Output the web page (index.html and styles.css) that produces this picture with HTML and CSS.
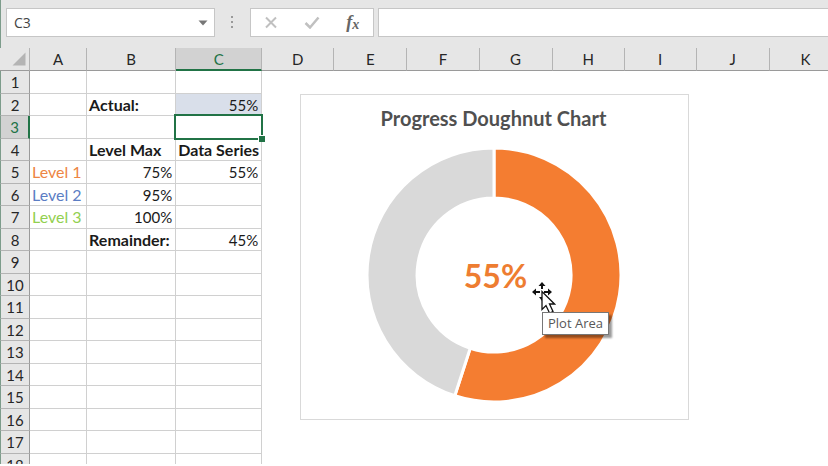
FILE: index.html
```html
<!DOCTYPE html>
<html lang="en">
<head>
    <meta charset="utf-8">
    <title>Progress Doughnut Chart</title>
    <link rel="stylesheet" href="styles.css">
</head>
<body>
    <header class="formula-bar">
        <div class="name-box">
            <input type="text" class="name-input" aria-label="Name box" value="C3">
            <button type="button" class="name-toggle" aria-label="Open name list">
                <svg width="10" height="6" viewBox="0 0 10 6"><path d="M0.5 0.5h9L5 5.5z" fill="#777"/></svg>
            </button>
        </div>
        <svg class="grip" width="3" height="13" viewBox="0 0 3 13" fill="#999">
            <path d="M0 0h2v2H0zM0 5h2v2H0zM0 10h2v2H0z"/>
        </svg>
        <div class="edit-buttons">
            <button type="button" aria-label="Cancel">
                <svg width="14" height="13" viewBox="0 0 14 13"><path d="M2 1.5l10 10M12 1.5l-10 10" stroke="#c0c0c0" stroke-width="2" fill="none"/></svg>
            </button>
            <button type="button" aria-label="Enter">
                <svg width="16" height="13" viewBox="0 0 16 13"><path d="M1.5 7l4.5 4.5L14.5 1.5" stroke="#c0c0c0" stroke-width="2.5" fill="none"/></svg>
            </button>
            <button type="button" class="fx" aria-label="Insert function"><i>f</i><i class="fx-small">x</i></button>
        </div>
        <input type="text" class="formula-input" aria-label="Formula">
    </header>

    <main class="sheet">
        <table class="grid">
            <colgroup>
                <col class="col-num"><col class="col-a"><col class="col-b"><col class="col-c">
                <col class="col-odd"><col class="col-even"><col class="col-odd"><col class="col-even">
                <col class="col-odd"><col class="col-odd"><col class="col-even"><col class="col-odd">
            </colgroup>
            <thead>
                <tr>
                    <th class="corner"><svg width="14" height="14" viewBox="0 0 14 14"><path d="M13.5 0.5v13H0.5z" fill="#b4b4b4"/></svg></th>
                    <th>A</th><th>B</th><th class="active">C</th><th>D</th><th>E</th><th>F</th>
                    <th>G</th><th>H</th><th>I</th><th>J</th><th>K</th>
                </tr>
            </thead>
            <tbody>
                <tr><th>1</th><td></td><td></td><td></td></tr>
                <tr><th>2</th><td></td><td class="label">Actual:</td><td class="filled">55%</td></tr>
                <tr><th class="active">3</th><td></td><td></td><td class="selected"><span class="selection"></span></td></tr>
                <tr><th>4</th><td></td><td class="label">Level Max</td><td class="label">Data Series</td></tr>
                <tr><th>5</th><td class="level level-1">Level 1</td><td>75%</td><td>55%</td></tr>
                <tr><th>6</th><td class="level level-2">Level 2</td><td>95%</td><td></td></tr>
                <tr><th>7</th><td class="level level-3">Level 3</td><td>100%</td><td></td></tr>
                <tr><th>8</th><td></td><td class="label">Remainder:</td><td>45%</td></tr>
                <tr><th>9</th><td></td><td></td><td></td></tr>
                <tr><th>10</th><td></td><td></td><td></td></tr>
                <tr><th>11</th><td></td><td></td><td></td></tr>
                <tr><th>12</th><td></td><td></td><td></td></tr>
                <tr><th>13</th><td></td><td></td><td></td></tr>
                <tr><th>14</th><td></td><td></td><td></td></tr>
                <tr><th>15</th><td></td><td></td><td></td></tr>
                <tr><th>16</th><td></td><td></td><td></td></tr>
                <tr><th>17</th><td></td><td></td><td></td></tr>
                <tr><th>18</th><td></td><td></td><td></td></tr>
            </tbody>
        </table>

        <section class="chart">
            <h2 class="chart-title">Progress Doughnut Chart</h2>
            <div class="plot">
                <svg width="254" height="254" viewBox="-127 -127 254 254" stroke="#fff" stroke-width="3">
                    <path fill="#f47d31" d="M0-127A127 127 0 1 1-39.2 120.8L-23.8 73.2A77 77 0 1 0 0-77z"/>
                    <path fill="#d9d9d9" d="M-39.2 120.8A127 127 0 0 1 0-127V-77A77 77 0 0 0-23.8 73.2z"/>
                </svg>
                <span class="plot-value">55%</span>
            </div>
        </section>

        <svg class="pointer" width="24" height="34" viewBox="0 0 24 34">
            <path d="M10 0l3.5 4h-2.500v3h-2V4h-2.500zM0 10l4-3.500v2.500h4v2H4v2.500zM20 10l-4-3.500v2.500h-4v2h4v2.500zM7 15h3v4z" fill="#111"/>
            <path d="M10 9.500v18l4-4 3.500 7.500 3.500-1.500-3.500-7.500h5z" fill="#fff" stroke="#111" stroke-width="1.300"/>
        </svg>
        <div class="tooltip" role="tooltip">Plot Area</div>
    </main>
</body>
</html>
```
FILE: styles.css
```css
* {
    box-sizing: border-box;
}

body {
    display: flex;
    flex-direction: column;
    height: 100vh;
    margin: 0;
    padding-bottom: 2px;
    overflow: hidden;
    background-color: #fff;
    color: #1a1a1a;
    font-family: Lato, "Open Sans", sans-serif;
    font-size: 15px;
}

button {
    display: flex;
    align-items: center;
    justify-content: center;
    padding: 0;
    border: none;
    background: none;
    cursor: pointer;
}

/* Formula bar */
.formula-bar {
    display: flex;
    flex: none;
    align-items: center;
    height: 48px;
    padding: 8px 0 11px 5px;
    border-left: 1px solid #7d9c8b;
    background-color: #e6e6e6;
}

.name-box,
.edit-buttons,
.formula-input {
    display: flex;
    height: 29px;
    border: 1px solid #c6c6c6;
    background-color: #fff;
}

.name-box {
    width: 209px;
}

.name-input {
    flex: 1;
    min-width: 0;
    padding: 0 7px;
    border: none;
    outline: none;
    color: #444;
    font: 14px "Open Sans", sans-serif;
}

.name-toggle {
    width: 22px;
}

.grip {
    margin: 0 16px;
}

.edit-buttons {
    width: 124px;
    margin-right: 4px;
}

.edit-buttons button {
    flex: 1;
}

.edit-buttons .fx {
    color: #666;
    font: bold 18px "Liberation Serif", serif;
}

.fx-small {
    padding-top: 4px;
    font-size: 14px;
}

.formula-input {
    flex: 1;
    min-width: 0;
    padding: 0 8px;
    border-right: none;
    outline: none;
    font: inherit;
}

/* Sheet */
.sheet {
    position: relative;
    flex: 1;
    min-height: 0;
    overflow: hidden;
}

.grid {
    width: 842px;
    table-layout: fixed;
    border-collapse: separate;
    border-spacing: 0;
}

.col-num { width: 30px; }
.col-a { width: 57px; }
.col-b { width: 89px; }
.col-c { width: 86px; }
.col-odd { width: 72px; }
.col-even { width: 73px; }

.grid th,
.grid td {
    padding: 0;
    line-height: 20px;
    white-space: nowrap;
}

.grid th {
    background-color: #e6e6e6;
    color: #262626;
    font-weight: normal;
    text-align: center;
}

.grid thead th {
    height: 23px;
    border-right: 1px solid #b4b4b4;
    border-bottom: 1px solid #9a9a9a;
}

.grid thead .active {
    border-bottom: 2px solid #217346;
    background-color: #d2d2d2;
    color: #217346;
}

.grid .corner {
    padding: 0 3px 0 0;
    text-align: right;
    line-height: 0;
}

.grid tbody tr {
    height: 23px;
}

.grid tbody tr:nth-child(even) {
    height: 22px;
}

.grid tbody th {
    border-right: 1px solid #9a9a9a;
    border-bottom: 1px solid #b4b4b4;
    border-left: 1px solid #7d9c8b;
}

.grid tbody .active {
    border-right: 2px solid #217346;
    background-color: #d2d2d2;
    color: #217346;
}

.grid td {
    padding: 0 3px;
    border-right: 1px solid #d0d0d0;
    border-bottom: 1px solid #d0d0d0;
    text-align: right;
}

.grid .label,
.grid .level {
    padding: 0 2px;
    font-size: 16px;
    text-align: left;
}

.grid .label {
    font-weight: bold;
}

.grid .filled {
    background-color: #d9dfea;
}

.grid .level-1 { color: #ed8544; }
.grid .level-2 { color: #5b7dc4; }
.grid .level-3 { color: #92d050; }

.grid .selected {
    position: relative;
}

.selection {
    position: absolute;
    inset: -2px;
    border: 2px solid #217346;
}

.selection::after {
    content: "";
    position: absolute;
    right: -4px;
    bottom: -4px;
    width: 6px;
    height: 6px;
    border: 1px solid #fff;
    border-width: 1px 0 0 1px;
    background-color: #217346;
}

/* Chart floating over the cells */
.chart {
    position: absolute;
    top: 46px;
    left: 300px;
    display: flex;
    flex-direction: column;
    align-items: center;
    width: 389px;
    padding: 11px 2px 17px 0;
    border: 1px solid #d9d9d9;
    background-color: #fff;
}

.chart-title {
    margin: 0 0 18px;
    color: #505050;
    font-size: 20px;
    line-height: 24px;
}

.plot {
    display: grid;
    place-items: center;
}

.plot svg,
.plot-value {
    grid-area: 1 / 1;
}

.plot-value {
    padding-left: 4px;
    color: #ee7d31;
    font-size: 32px;
    font-weight: bold;
}

.pointer {
    position: absolute;
    top: 234px;
    left: 532px;
}

.tooltip {
    position: absolute;
    top: 264px;
    left: 542px;
    padding: 0 5px;
    border: 1px solid #777;
    background-color: #fff;
    box-shadow: 3px 3px 2px rgba(0, 0, 0, 0.4);
    color: #575757;
    font: 13px/21px "Open Sans", sans-serif;
}
```
